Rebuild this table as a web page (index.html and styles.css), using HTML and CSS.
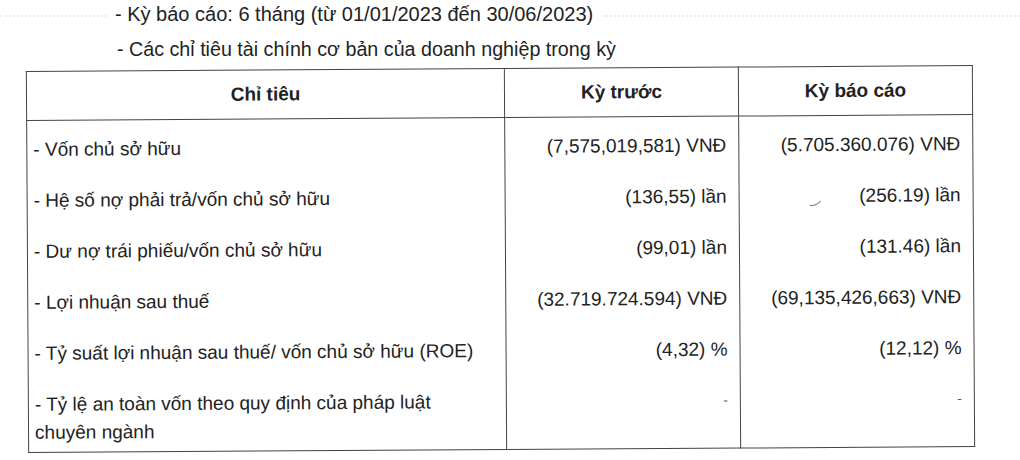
FILE: index.html
```html
<!DOCTYPE html>
<html lang="vi">
<head>
<meta charset="utf-8">
<title>Chỉ tiêu tài chính</title>
<link rel="stylesheet" href="styles.css">
</head>
<body>
<div class="page">
  <div class="intro">
    <div class="line first">
      <span class="leader lead-left"></span>
      <span class="txt">- Kỳ báo cáo: 6 tháng (từ 01/01/2023 đến 30/06/2023)</span>
      <span class="leader lead-right"></span>
    </div>
    <div class="line second">
      <span class="txt">- Các chỉ tiêu tài chính cơ bản của doanh nghiệp trong kỳ</span>
    </div>
  </div>
  <div class="table-wrap">
    <table class="fin">
      <colgroup>
        <col class="c1"><col class="c2"><col class="c3">
      </colgroup>
      <thead>
        <tr>
          <th>Chỉ tiêu</th>
          <th>Kỳ trước</th>
          <th>Kỳ báo cáo</th>
        </tr>
      </thead>
      <tbody>
        <tr>
          <td class="label">- Vốn chủ sở hữu</td>
          <td class="num">(7,575,019,581) VNĐ</td>
          <td class="num">(5.705.360.076) VNĐ</td>
        </tr>
        <tr>
          <td class="label">- Hệ số nợ phải trả/vốn chủ sở hữu</td>
          <td class="num">(136,55) lần</td>
          <td class="num mark-cell">(256.19) lần<svg class="mark" width="14" height="8" viewBox="0 0 14 8"><path d="M1 6 Q6 8 12 2" fill="none" stroke="#9a9a9a" stroke-width="1.2"/></svg></td>
        </tr>
        <tr>
          <td class="label">- Dư nợ trái phiếu/vốn chủ sở hữu</td>
          <td class="num">(99,01) lần</td>
          <td class="num">(131.46) lần</td>
        </tr>
        <tr>
          <td class="label">- Lợi nhuận sau thuế</td>
          <td class="num">(32.719.724.594) VNĐ</td>
          <td class="num">(69,135,426,663) VNĐ</td>
        </tr>
        <tr>
          <td class="label">- Tỷ suất lợi nhuận sau thuế/ vốn chủ sở hữu (ROE)</td>
          <td class="num">(4,32) %</td>
          <td class="num">(12,12) %</td>
        </tr>
        <tr class="last">
          <td class="label">- Tỷ lệ an toàn vốn theo quy định của pháp luật<br>chuyên ngành</td>
          <td class="num dash">-</td>
          <td class="num dash">-</td>
        </tr>
      </tbody>
    </table>
  </div>
</div>
</body>
</html>
```
FILE: styles.css
```css
html, body {
  margin: 0;
  padding: 0;
  background: #ffffff;
}
body {
  font-family: "Liberation Sans", Arial, sans-serif;
  color: #222222;
}
.page {
  width: 1020px;
  height: 460px;
  overflow: hidden;
}
.intro {
  font-size: 20px;
}
.line {
  display: flex;
  align-items: center;
  height: 28px;
  line-height: 28px;
  white-space: nowrap;
}
.line.first {
  gap: 8px;
}
.line.second {
  margin-top: 7px;
  padding-left: 117px;
  font-size: 19.7px;
}
.leader {
  height: 0;
  border-top: 2px dotted #ececec;
  margin-top: 4px;
}
.lead-left {
  width: 107px;
  flex: none;
}
.lead-right {
  flex: 1;
  margin-left: 2px;
}
.table-wrap {
  margin-top: 5px;
  padding-left: 27px;
}
.fin {
  border-collapse: collapse;
  table-layout: fixed;
  width: 946px;
  font-size: 19px;
  transform: rotate(-0.35deg);
  transform-origin: 50% 50%;
}
.c1 { width: 478px; }
.c2 { width: 234px; }
.c3 { width: 234px; }
.fin th, .fin td {
  border-left: 1.5px solid #444;
  border-right: 1.5px solid #444;
}
.fin thead th {
  height: 48px;
  padding: 0;
  text-align: center;
  vertical-align: middle;
  font-weight: bold;
  border-top: 1.5px solid #444;
  border-bottom: 1.5px solid #444;
  line-height: 22px;
}
.fin td {
  padding: 15px 12px 8px 6px;
  line-height: 28px;
  vertical-align: top;
}
.fin .num {
  text-align: right;
}
.fin tr.last td {
  padding-bottom: 5px;
  border-bottom: 1.5px solid #444;
}
.fin .dash {
  color: #555;
  font-size: 14px;
  line-height: 26px;
}
.mark-cell {
  position: relative;
}
.mark {
  position: absolute;
  left: 69px;
  top: 32px;
}
```
